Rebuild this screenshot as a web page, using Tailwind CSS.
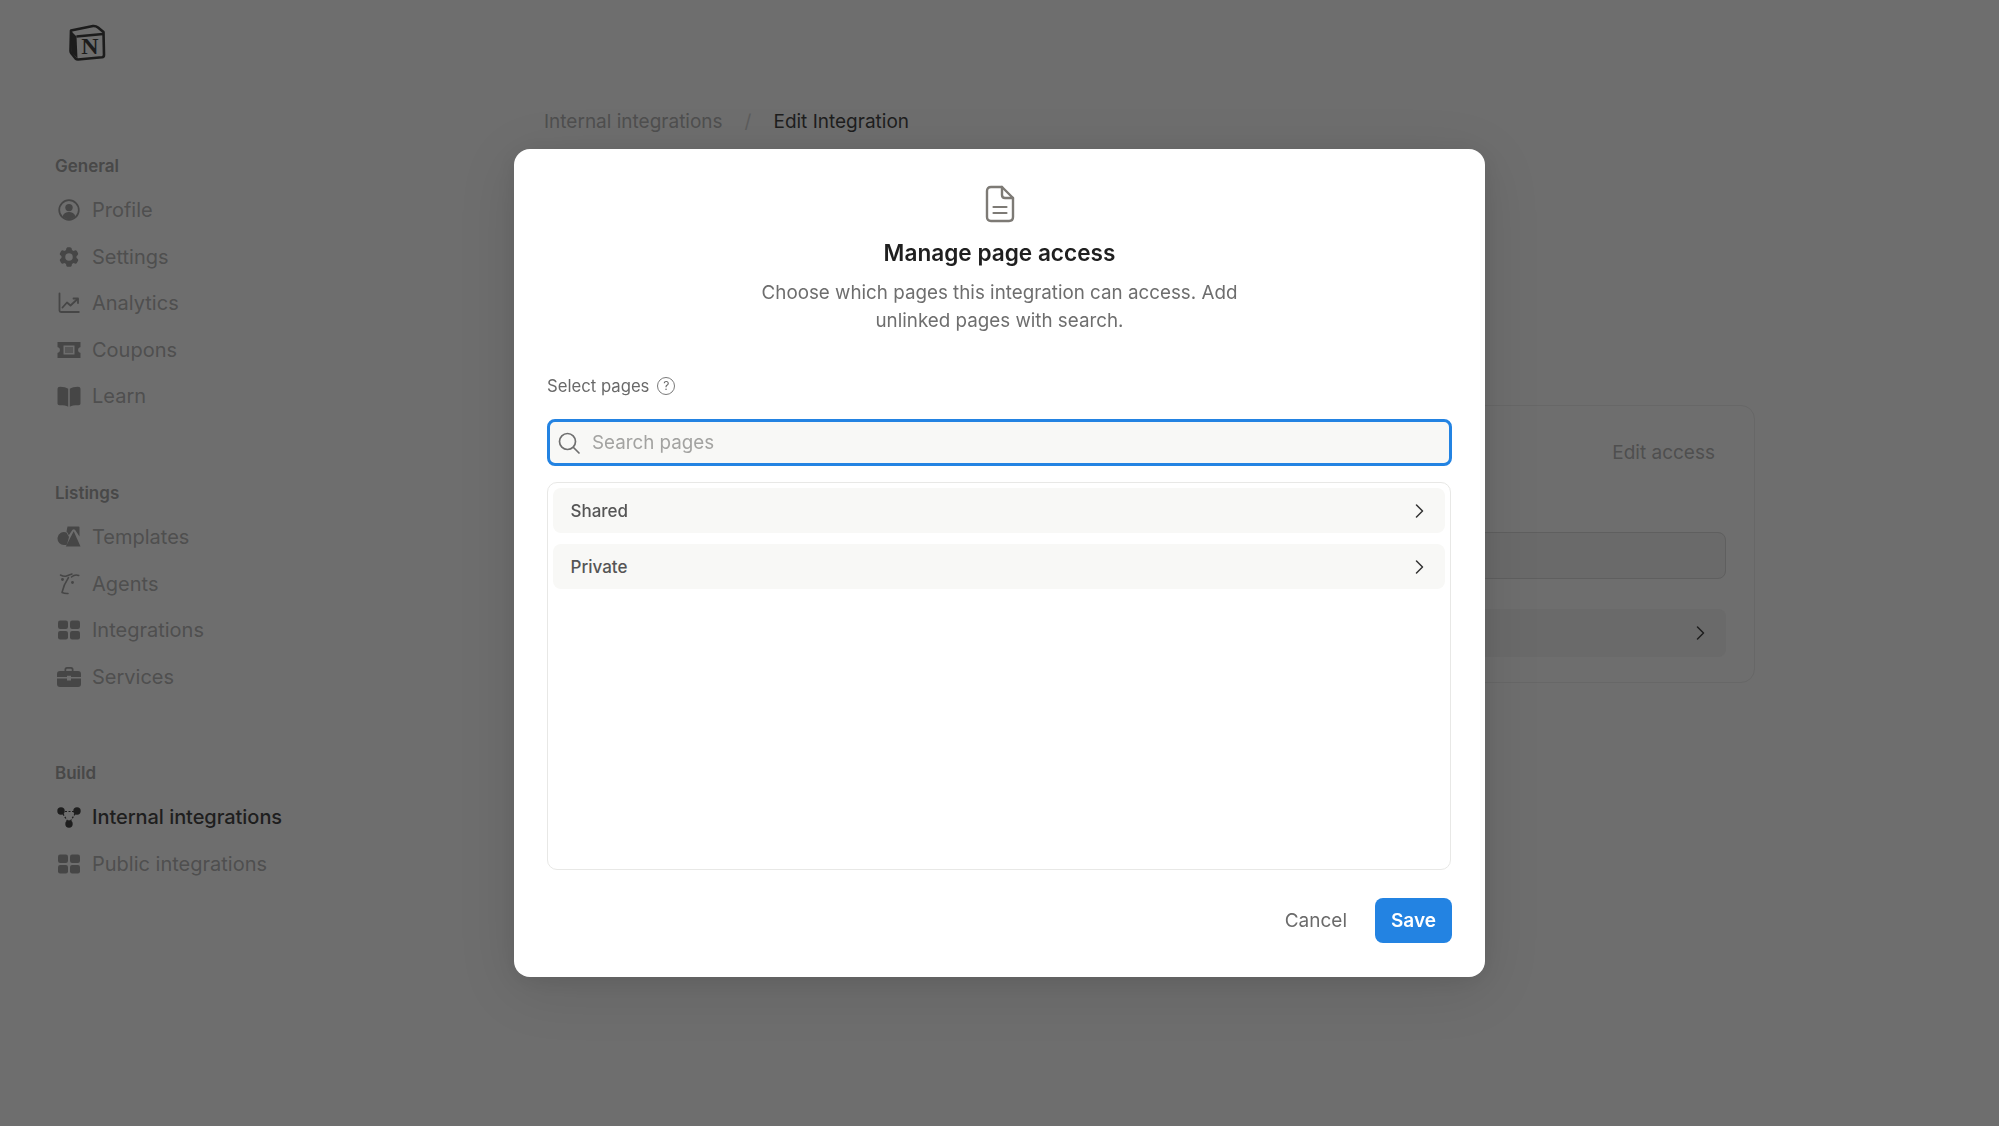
<!DOCTYPE html>
<html lang="en">
<head>
    <meta charset="UTF-8">
    <meta name="viewport" content="width=device-width, initial-scale=1.0">
    <title>Manage page access</title>
    <script src="https://cdn.jsdelivr.net/npm/@tailwindcss/browser@4"></script>
</head>
<body class="bg-[#6e6e6e] font-[Inter,sans-serif] text-[20px] text-[#4f4f4f] antialiased overflow-hidden">

    <div class="flex h-[1126px]">

        <!-- Sidebar -->
        <aside class="w-[544px] shrink-0 pl-[55px] pt-[24px]">
            <svg class="w-[37px] h-[37px] ml-[14px]" viewBox="0 0 37 37">
                <path d="M2 6.500 L24 2 Q27 1.800 29 3.500 L34.500 8 L35 31 Q35 33 33 33.300 L9 35.500 Q7.500 35.500 6.500 34.500 L2.500 29.500 Q1.500 28.500 1.500 27 Z" fill="#6e6e6e" stroke="#1c1c1c" stroke-width="2.600" stroke-linejoin="round"/>
                <path d="M2 7 L7.500 12.500 L8.500 34.500 L2.500 28.500 Z" fill="#1c1c1c"/>
                <path d="M7.500 12.500 L34 10" fill="none" stroke="#1c1c1c" stroke-width="2.600"/>
                <text x="21" y="30" text-anchor="middle" font-family="'Liberation Serif',serif" font-weight="700" font-size="24" fill="#1c1c1c">N</text>
            </svg>

            <nav class="mt-[94px]">
                <div class="h-6 mb-[8px] flex items-center text-[17px] font-semibold text-[#484848]">General</div>
                <a class="h-[46.5px] flex items-center gap-[11px] pl-[2px]">
                    <svg class="w-6 h-6 text-[#464646]" viewBox="0 0 24 24" fill="currentColor"><circle cx="12" cy="12" r="9.800" fill="none" stroke="currentColor" stroke-width="1.700"/><circle cx="12" cy="9.600" r="3.700"/><path d="M5.600 18.200c1-3 3.600-4.200 6.400-4.200s5.400 1.200 6.400 4.200c-1.600 1.900-3.900 3-6.400 3s-4.800-1.100-6.400-3z"/></svg>
                    <span>Profile</span>
                </a>
                <a class="h-[46.5px] flex items-center gap-[11px] pl-[2px]">
                    <svg class="w-6 h-6 text-[#464646]" viewBox="0 0 24 24" fill="currentColor"><path fill-rule="evenodd" clip-rule="evenodd" d="M11.078 2.25c-.917 0-1.699.663-1.85 1.567L9.05 4.889c-.02.12-.115.26-.297.348a7.493 7.493 0 0 0-.986.57c-.166.115-.334.126-.45.083L6.3 5.508a1.875 1.875 0 0 0-2.282.819l-.922 1.597a1.875 1.875 0 0 0 .432 2.385l.84.692c.095.078.17.229.154.43a7.598 7.598 0 0 0 0 1.139c.015.2-.059.352-.153.43l-.841.692a1.875 1.875 0 0 0-.432 2.385l.922 1.597a1.875 1.875 0 0 0 2.282.818l1.019-.382c.115-.043.283-.031.45.082.312.214.641.405.985.57.182.088.277.228.297.35l.178 1.071c.151.904.933 1.567 1.85 1.567h1.844c.916 0 1.699-.663 1.85-1.567l.178-1.072c.02-.12.114-.26.297-.349.344-.165.673-.356.985-.57.167-.114.335-.125.45-.082l1.02.382a1.875 1.875 0 0 0 2.28-.819l.923-1.597a1.875 1.875 0 0 0-.432-2.385l-.84-.692c-.095-.078-.17-.229-.154-.43a7.614 7.614 0 0 0 0-1.139c-.016-.2.059-.352.153-.43l.84-.692c.708-.582.891-1.59.433-2.385l-.922-1.597a1.875 1.875 0 0 0-2.282-.818l-1.02.382c-.114.043-.282.031-.449-.083a7.49 7.49 0 0 0-.985-.57c-.183-.087-.277-.227-.297-.348l-.179-1.072a1.875 1.875 0 0 0-1.85-1.567h-1.843ZM12 15.750a3.750 3.750 0 1 0 0-7.500 3.750 3.750 0 0 0 0 7.500Z"/></svg>
                    <span>Settings</span>
                </a>
                <a class="h-[46.5px] flex items-center gap-[11px] pl-[2px]">
                    <svg class="w-6 h-6 text-[#464646]" viewBox="0 0 24 24" fill="none" stroke="currentColor" stroke-width="1.800" stroke-linecap="round" stroke-linejoin="round"><path d="M2.500 2.500V19.500Q2.500 21 4 21H21.800"/><path d="M5.500 16.500L10 11.500L13.500 14.500L20.500 8"/><path d="M16.500 7.500H21V12"/></svg>
                    <span>Analytics</span>
                </a>
                <a class="h-[46.5px] flex items-center gap-[11px] pl-[2px]">
                    <svg class="w-6 h-6 text-[#464646]" viewBox="0 0 24 24" fill="currentColor"><path fill-rule="evenodd" d="M0.500 4H23.500V9Q21 9.500 21 12T23.500 15V20H0.500V15Q3 14.500 3 12T0.500 9ZM6.500 7.500V16.500H17.500V7.500Z"/><rect x="8" y="9" width="8" height="6" opacity=".55"/></svg>
                    <span>Coupons</span>
                </a>
                <a class="h-[46.5px] flex items-center gap-[11px] pl-[2px]">
                    <svg class="w-6 h-6 text-[#464646]" viewBox="0 0 24 24" fill="currentColor"><path d="M11.200 4.800C9.400 3.400 6.500 2.700 3 2.700Q.500 2.700.500 4.700V19.500Q.500 21.300 2.500 21.300C6 21.200 9 21.600 11.200 22.800Z"/><path d="M12.800 4.800C14.600 3.400 17.500 2.700 21 2.700Q23.500 2.700 23.500 4.700V19.500Q23.500 21.300 21.500 21.300C18 21.200 15 21.600 12.800 22.800Z"/></svg>
                    <span>Learn</span>
                </a>

                <div class="h-6 mt-[62.5px] mb-[8px] flex items-center text-[17px] font-semibold text-[#484848]">Listings</div>
                <a class="h-[46.5px] flex items-center gap-[11px] pl-[2px]">
                    <svg class="w-6 h-6 text-[#464646]" viewBox="0 0 24 24" fill="currentColor"><path d="M10.500 1.500H21.500Q22.500 1.500 22.500 2.500V11.500L18 4.800Q16.800 3.500 15.500 4.800L11.800 10.200Q10.500 7 9.500 6.500Z"/><path d="M9.500 7.500A6.500 6.500 0 1 0 7.500 20Q9 20 10 19.500L12 12Z" /><path d="M16.700 6.300L23.500 21.500H8.800Z"/></svg>
                    <span>Templates</span>
                </a>
                <a class="h-[46.5px] flex items-center gap-[11px] pl-[2px]">
                    <svg class="w-6 h-6 text-[#464646]" viewBox="0 0 24 24" fill="none" stroke="currentColor" stroke-width="1.500" stroke-linecap="round" stroke-linejoin="round"><path d="M3.500 3Q7 5 9.500 4T15 2"/><path d="M11.500 5.500Q6.500 13 5 20.500Q8 21.800 11 21.500"/><path d="M14.500 5Q18 1.800 21.800 3.500"/><circle cx="5.500" cy="7.500" r=".7"/><circle cx="15.500" cy="10.500" r=".7"/></svg>
                    <span>Agents</span>
                </a>
                <a class="h-[46.5px] flex items-center gap-[11px] pl-[2px]">
                    <svg class="w-6 h-6 text-[#464646]" viewBox="0 0 24 24" fill="currentColor"><rect x="1" y="2.500" width="10" height="8.500" rx="2.200"/><rect x="13" y="2.500" width="10" height="8.500" rx="2.200"/><rect x="1" y="13" width="10" height="8.500" rx="2.200"/><rect x="13" y="13" width="10" height="8.500" rx="2.200"/></svg>
                    <span>Integrations</span>
                </a>
                <a class="h-[46.5px] flex items-center gap-[11px] pl-[2px]">
                    <svg class="w-6 h-6 text-[#464646]" viewBox="0 0 24 24" fill="currentColor"><path d="M7.500 6V4.500Q7.500 2 10 2H14Q16.500 2 16.500 4.500V6H14.800V4.800Q14.800 3.700 13.700 3.700H10.300Q9.200 3.700 9.200 4.800V6Z"/><path d="M3 6H21Q24 6 24 9V12H14V10.800H10V12H0V9Q0 6 3 6Z"/><path d="M0 13.500H10V15.500H14V13.500H24V19Q24 22 21 22H3Q0 22 0 19Z"/></svg>
                    <span>Services</span>
                </a>

                <div class="h-6 mt-[62px] mb-[8px] flex items-center text-[17px] font-semibold text-[#484848]">Build</div>
                <a class="h-[46.5px] flex items-center gap-[11px] pl-[2px] text-[#1e1e1e] font-medium tracking-[-0.05px]">
                    <svg class="w-6 h-6" viewBox="0 0 24 24" fill="currentColor"><path d="M4.500 6.500H19.500L12 18.500Z" fill="none" stroke="currentColor" stroke-width="1.200" stroke-dasharray="2 1.500"/><circle cx="4" cy="6" r="3.700"/><circle cx="20" cy="6" r="3.700"/><circle cx="12" cy="19" r="3.700"/></svg>
                    <span>Internal integrations</span>
                </a>
                <a class="h-[46.5px] flex items-center gap-[11px] pl-[2px]">
                    <svg class="w-6 h-6 text-[#464646]" viewBox="0 0 24 24" fill="currentColor"><rect x="1" y="2.500" width="10" height="8.500" rx="2.200"/><rect x="13" y="2.500" width="10" height="8.500" rx="2.200"/><rect x="1" y="13" width="10" height="8.500" rx="2.200"/><rect x="13" y="13" width="10" height="8.500" rx="2.200"/></svg>
                    <span>Public integrations</span>
                </a>
            </nav>
        </aside>

        <!-- Main behind the dialog -->
        <main class="w-[1211px] pt-[108px] text-[19px]">
            <div class="h-7 flex items-center">
                <span>Internal integrations</span>
                <span class="mx-[22px] text-[#5c5c5c]">/</span>
                <span class="text-[#1e1e1e]">Edit Integration</span>
            </div>
            <section class="mt-[269px] h-[278px] rounded-[14px] border border-[#676767] px-7">
                <div class="h-[126px] flex justify-end items-start pt-[33px] pr-[11px]">
                    <span>Edit access</span>
                </div>
                <div class="h-[47px] rounded-[8px] border border-[#5f5f5f] bg-[#6a6a6a]"></div>
                <div class="h-[48px] mt-[30px] rounded-[8px] bg-[#6a6a6a] flex justify-end items-center pr-[18px]">
                    <svg class="w-[16px] h-[16px] text-[#1e1e1e]" viewBox="0 0 16 16" fill="none" stroke="currentColor" stroke-width="1.500" stroke-linecap="round" stroke-linejoin="round"><path d="M5.500 2L11.500 8L5.500 14"/></svg>
                </div>
            </section>
        </main>
    </div>

    <!-- Dialog -->
    <div class="fixed inset-0 flex items-center justify-center">
        <div class="w-[971px] h-[828px] rounded-[16px] bg-white px-[33px] pt-[36px] text-[18.8px] shadow-[0_4px_24px_rgba(0,0,0,0.08),0_12px_60px_rgba(0,0,0,0.1)]">
            <div class="flex flex-col items-center text-center">
                <svg class="w-[30px] h-[38px] text-[#7d7a75]" viewBox="0 0 30 38" fill="none" stroke="currentColor" stroke-width="2.400" stroke-linejoin="round" stroke-linecap="round"><path d="M6 2H17L28 13V32Q28 36 24 36H6Q2 36 2 32V6Q2 2 6 2Z"/><path d="M17 2V10Q17 13 20 13H28"/><path d="M8.500 22H21.500M8.500 28H21.500" stroke-width="2.200"/></svg>
                <h2 class="mt-[14px] text-[22.6px] leading-[32px] font-semibold text-[#1f1f1f]">Manage page access</h2>
                <p class="mt-[10px] w-[500px] leading-[28px] text-[#6e6e6e]">Choose which pages this integration can access. Add unlinked pages with search.</p>
            </div>

            <div class="mt-[38px] flex items-center gap-[8px] h-[28px] text-[16.7px] text-[#696969]">
                <span>Select pages</span>
                <span class="w-[18px] h-[18px] -mt-[2px] rounded-full border border-[#7a7a7a] text-[12px] leading-none flex items-center justify-center">?</span>
            </div>

            <div class="mt-[18px] h-[47px] rounded-[8px] border-[3px] border-[#2383e2] bg-[#f8f8f6] flex items-center pl-[7px] gap-[11px]">
                <svg class="w-[24px] h-[24px] text-[#6f6f6f]" viewBox="0 0 24 24" fill="none" stroke="currentColor" stroke-width="1.700" stroke-linecap="round"><circle cx="10.500" cy="10.500" r="8"/><path d="M16.500 16.500L22 22"/></svg>
                <span class="pt-[2px] text-[#a3a3a1]">Search pages</span>
            </div>

            <div class="mt-[16px] w-[904px] h-[388px] rounded-[10px] border border-[#e8e8e6] p-[5px] flex flex-col gap-[11px]">
                <div class="h-[45px] rounded-[8px] bg-[#f8f8f6] flex items-center justify-between pl-[17.5px] pr-[18px] text-[17px] font-medium text-[#555]">
                    <span class="pt-[2px]">Shared</span>
                    <svg class="w-[16px] h-[16px] text-[#333]" viewBox="0 0 16 16" fill="none" stroke="currentColor" stroke-width="1.500" stroke-linecap="round" stroke-linejoin="round"><path d="M5.500 2L11.500 8L5.500 14"/></svg>
                </div>
                <div class="h-[45px] rounded-[8px] bg-[#f8f8f6] flex items-center justify-between pl-[17.5px] pr-[18px] text-[17px] font-medium text-[#555]">
                    <span class="pt-[2px]">Private</span>
                    <svg class="w-[16px] h-[16px] text-[#333]" viewBox="0 0 16 16" fill="none" stroke="currentColor" stroke-width="1.500" stroke-linecap="round" stroke-linejoin="round"><path d="M5.500 2L11.500 8L5.500 14"/></svg>
                </div>
            </div>

            <div class="mt-[28px] flex justify-end items-center gap-[28px] text-[19px]">
                <button class="pt-[2px] text-[#6b6b6b]">Cancel</button>
                <button class="w-[77px] h-[45px] pt-[2px] rounded-[8px] bg-[#2383e2] text-white font-semibold">Save</button>
            </div>
        </div>
    </div>

</body>
</html>
